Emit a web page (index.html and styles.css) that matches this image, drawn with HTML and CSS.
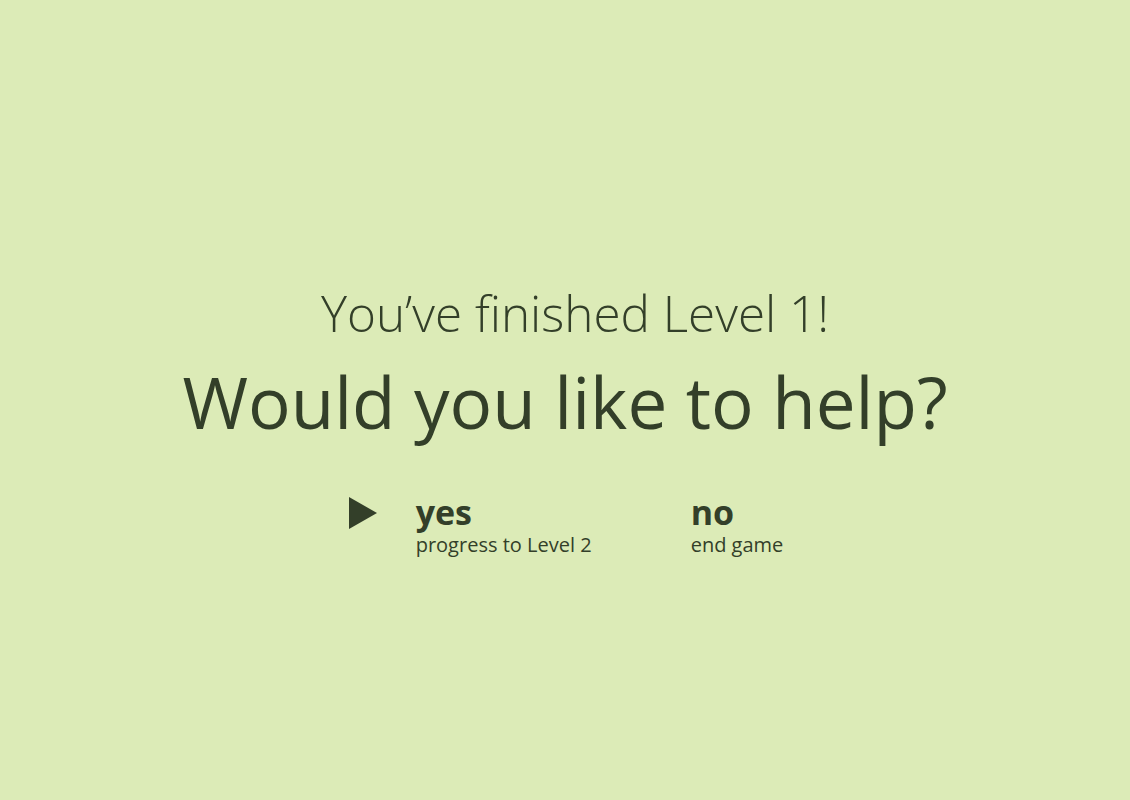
FILE: index.html
```html
<!DOCTYPE html>
<html>
<head>
<meta charset="utf-8">
<link rel="stylesheet" href="styles.css">
</head>
<body>
<main class="screen">
  <p class="subtitle">You’ve finished Level 1!</p>
  <h1 class="title">Would you like to help?</h1>
  <div class="choices">
    <div class="choice selected">
      <svg class="cursor" width="28" height="32" viewBox="0 0 28 32"><polygon points="0,0 28,16 0,32" fill="#333f29"/></svg>
      <div class="choice-text">
        <div class="choice-label">yes</div>
        <div class="choice-desc">progress to Level 2</div>
      </div>
    </div>
    <div class="choice">
      <div class="choice-text">
        <div class="choice-label">no</div>
        <div class="choice-desc">end game</div>
      </div>
    </div>
  </div>
</main>
</body>
</html>
```
FILE: styles.css
```css
html, body {
  margin: 0;
  padding: 0;
  background: #dcebb7;
}
body {
  width: 1130px;
  height: 800px;
  overflow: hidden;
  font-family: "Open Sans", "Noto Sans", sans-serif;
  color: #333f29;
}
.screen {
  display: flex;
  flex-direction: column;
  align-items: center;
  padding-top: 278px;
}
.subtitle {
  margin: 0 0 0 20px;
  font-size: 49.4px;
  font-weight: 300;
  line-height: 70px;
}
.title {
  margin: 0;
  font-size: 71px;
  font-weight: 400;
  line-height: 107px;
}
.choices {
  display: flex;
  margin-top: 38px;
  margin-left: 2px;
}
.choice {
  display: flex;
  align-items: flex-start;
}
.choice.selected {
  width: 342px;
}
.cursor {
  margin-top: 4px;
  margin-right: 39px;
}
.choice-label {
  font-size: 34px;
  font-weight: 700;
  line-height: 38px;
}
.choice-desc {
  font-size: 20px;
  line-height: 28px;
}
```
